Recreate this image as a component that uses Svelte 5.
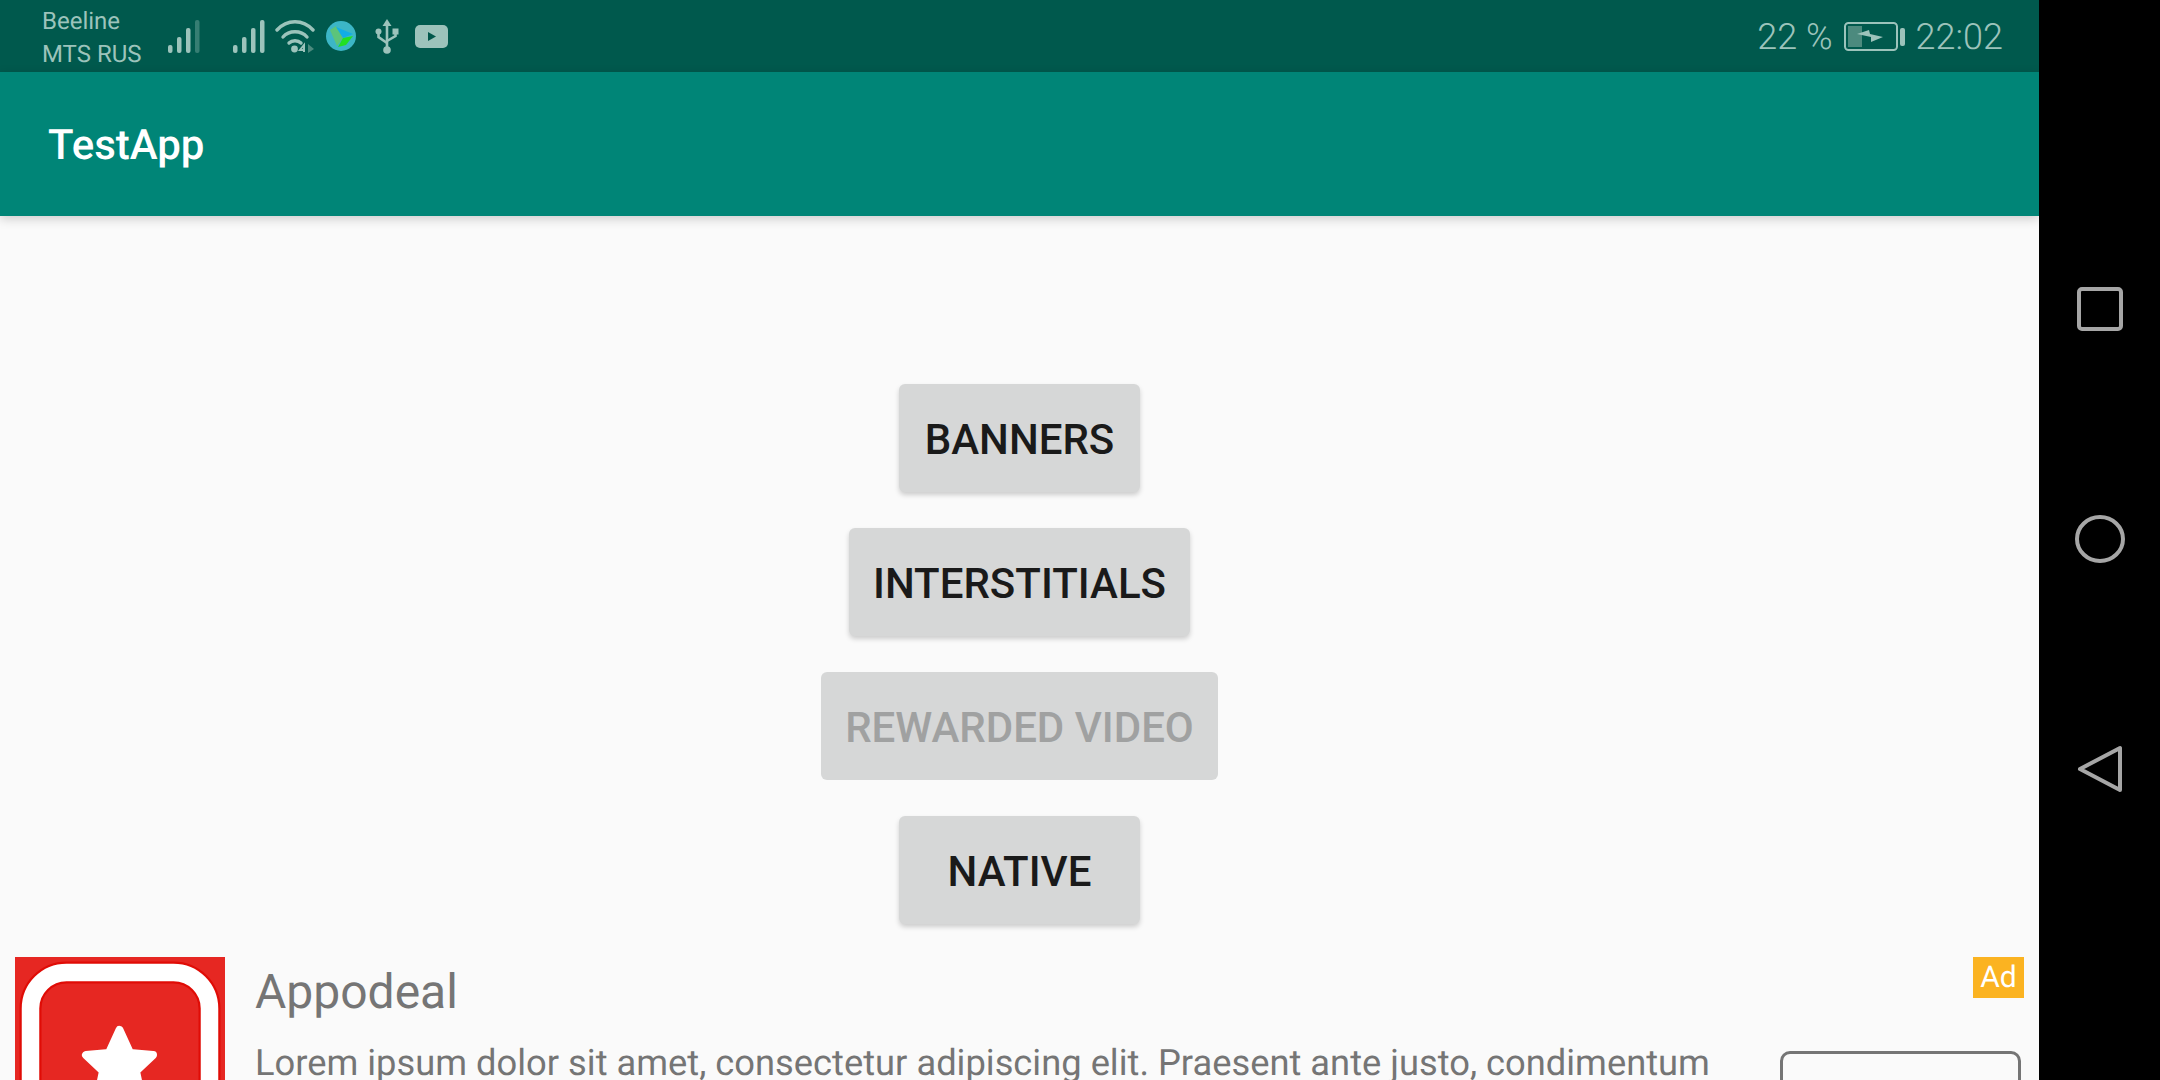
<script>
  const buttons = [
    { label: "Banners" },
    { label: "Interstitials" },
    { label: "Rewarded Video", disabled: true },
    { label: "Native" },
  ];
  const bars = [
    { x: 2, h: 8 },
    { x: 11, h: 16 },
    { x: 20, h: 25 },
    { x: 29, h: 33 },
  ];
</script>

<div class="device">
  <div class="screen">
    <div class="status-bar">
      <div class="carriers">
        <span>Beeline</span>
        <span>MTS RUS</span>
      </div>
      <div class="status-icons">
        <svg class="signal" width="35" height="33" viewBox="0 0 35 33">
          {#each bars as bar, i}
            <rect x={bar.x} y={33 - bar.h} width="4.5" height={bar.h} rx="2" fill="#9cc3bb" opacity={i === 3 ? 0.35 : 1} />
          {/each}
        </svg>
        <svg class="signal second" width="35" height="33" viewBox="0 0 35 33">
          {#each bars as bar}
            <rect x={bar.x} y={33 - bar.h} width="4.5" height={bar.h} rx="2" fill="#9cc3bb" />
          {/each}
        </svg>
        <svg class="wifi" width="40" height="34" viewBox="0 0 40 34">
          <g fill="none" stroke="#9cc3bb" stroke-width="3.4" stroke-linecap="round">
            <path d="M2 11C12 0 28 0 38 11" />
            <path d="M8 18C14 11 26 11 32 18" />
            <path d="M14 24C17 21 23 21 26 24" />
          </g>
          <circle cx="19.5" cy="30" r="3.4" fill="#9cc3bb" />
          <path d="M29 33V26L25 31H29" fill="none" stroke="#9cc3bb" stroke-width="2" />
          <path d="M33 25L39 30L33 34Z" fill="#4c8a7e" />
        </svg>
        <svg class="globe" width="30" height="30" viewBox="0 0 30 30">
          <circle cx="15" cy="15" r="15" fill="#3cb6c6" />
          <path d="M4 9L10 5L17 17L11 25Z" fill="#5cc47a" />
          <path d="M12 26L17 17L27 15L20 24Z" fill="#22e022" />
          <path d="M10 6L27 13L17 17Z" fill="#12ade6" />
        </svg>
        <svg class="usb" width="24" height="35" viewBox="0 0 24 35">
          <path d="M12 0L16.5 7H7.5Z" fill="#9cc3bb" />
          <circle cx="12" cy="31" r="3.8" fill="#9cc3bb" />
          <g fill="none" stroke="#9cc3bb" stroke-width="2.6">
            <path d="M12 5V30" />
            <path d="M3.5 14V18L12 24" />
            <path d="M20.5 13V17L12 22" />
          </g>
          <circle cx="3.5" cy="12.5" r="3" fill="#9cc3bb" />
          <rect x="17.5" y="9.5" width="6" height="6" fill="#9cc3bb" />
        </svg>
        <svg class="yt" width="33" height="23" viewBox="0 0 33 23">
          <rect width="33" height="23" rx="5" fill="#9cc3bb" />
          <path d="M13 7L21 11.5L13 16Z" fill="#00574b" />
        </svg>
      </div>
      <div class="status-right">
        <span>22 %</span>
        <svg class="battery" width="61" height="29" viewBox="0 0 61 29">
          <rect x="1" y="1" width="52" height="27" rx="3.5" fill="none" stroke="#9cc3bb" stroke-width="2" />
          <rect x="4" y="4" width="14" height="21" fill="#4c8a7e" />
          <path d="M13 12L25 8L26 12L39 15L27 20L27 15Z" fill="#9cc3bb" />
          <rect x="56" y="6" width="5" height="18" rx="2" fill="#9cc3bb" />
        </svg>
        <span class="clock">22:02</span>
      </div>
    </div>

    <header class="app-bar">TestApp</header>

    <main class="content">
      <div class="actions">
        {#each buttons as btn}
          <button disabled={btn.disabled}>{btn.label}</button>
        {/each}
      </div>

      <div class="ad">
        <svg class="ad-icon" width="210" height="210" viewBox="0 0 210 210">
          <rect width="210" height="210" fill="#e62722" />
          <rect x="15.5" y="15.5" width="179" height="190" rx="36" fill="none" stroke="#e00c06" stroke-width="22" />
          <rect x="15.5" y="15.5" width="179" height="190" rx="36" fill="none" stroke="#fff" stroke-width="17.5" />
          <polygon
            points="104.5,73 115,96 138,98 121,114 126,138 104.5,126 83,138 88,114 71,98 94,96"
            fill="#fff"
            stroke="#fff"
            stroke-width="8"
            stroke-linejoin="round"
          />
        </svg>
        <div class="ad-body">
          <h2>Appodeal</h2>
          <p>Lorem ipsum dolor sit amet, consectetur adipiscing elit. Praesent ante justo, condimentum</p>
        </div>
        <div class="cta"></div>
        <span class="ad-badge">Ad</span>
      </div>
    </main>
  </div>

  <nav class="nav-bar">
    <svg width="46" height="46" viewBox="0 0 46 46">
      <rect x="2" y="2" width="42" height="40" rx="3" fill="none" stroke="#a6a6a6" stroke-width="4" />
    </svg>
    <svg width="50" height="48" viewBox="0 0 50 48">
      <ellipse cx="25" cy="24" rx="23" ry="22" fill="none" stroke="#a6a6a6" stroke-width="4" />
    </svg>
    <svg width="46" height="48" viewBox="0 0 46 48">
      <path d="M43 3V45L3 24Z" fill="none" stroke="#a6a6a6" stroke-width="4" stroke-linejoin="round" />
    </svg>
  </nav>
</div>

<style>
  :global(body) {
    margin: 0;
    background: #000;
  }

  .device {
    display: flex;
    width: 2160px;
    height: 1080px;
    overflow: hidden;
    font-family: Roboto, "Liberation Sans", sans-serif;
    text-rendering: geometricPrecision;
  }

  .screen {
    flex: 1;
    display: flex;
    flex-direction: column;
    background: #fafafa;
    min-width: 0;
    overflow: hidden;
  }

  .status-bar {
    flex: none;
    display: flex;
    align-items: center;
    height: 72px;
    padding: 0 36px 0 42px;
    background: #00594d;
    color: #9cc3bb;
  }

  .carriers {
    display: flex;
    flex-direction: column;
    width: 124px;
    padding-top: 3px;
    font-size: 24px;
    line-height: 33px;
  }

  .status-icons {
    display: flex;
    align-items: center;
  }

  .second {
    margin-left: 30px;
  }

  .wifi {
    margin-left: 9px;
  }

  .globe {
    margin-left: 11px;
  }

  .usb {
    margin-left: 19px;
  }

  .yt {
    margin-left: 16px;
  }

  .status-right {
    display: flex;
    align-items: center;
    margin-left: auto;
    padding-top: 2px;
    font-size: 36px;
    font-weight: 300;
  }

  .battery {
    margin: -2px 0 0 11px;
  }

  .clock {
    margin-left: 11px;
  }

  .app-bar {
    flex: none;
    position: relative;
    display: flex;
    align-items: center;
    box-sizing: border-box;
    height: 144px;
    padding: 2px 0 0 48px;
    background: #008577;
    color: #fff;
    font-size: 42px;
    font-weight: 500;
    box-shadow: 0 3px 10px rgba(0, 0, 0, 0.18);
  }

  .content {
    flex: none;
    padding-top: 168px;
  }

  .actions {
    display: flex;
    flex-direction: column;
    align-items: center;
    gap: 36px;
  }

  button {
    min-width: 241px;
    height: 108px;
    padding: 2px 24px 0;
    border: 0;
    border-radius: 6px;
    background: #d6d7d7;
    color: #1a1a1a;
    font-family: inherit;
    font-size: 42px;
    font-weight: 500;
    text-transform: uppercase;
    box-shadow: 0 3px 5px rgba(0, 0, 0, 0.18);
  }

  button:disabled {
    color: #a0a1a1;
    box-shadow: none;
  }

  .ad {
    position: relative;
    display: flex;
    margin-top: 33px;
    padding: 0 18px 0 15px;
  }

  .ad-icon {
    flex: none;
  }

  .ad-body {
    flex: 1;
    margin-left: 30px;
    color: #757575;
    white-space: nowrap;
  }

  h2 {
    margin: 7px 0 0;
    font-size: 48px;
    font-weight: 400;
    line-height: 56px;
  }

  p {
    margin: 22px 0 0;
    font-size: 36.3px;
    line-height: 42px;
  }

  .cta {
    flex: none;
    width: 241px;
    height: 100px;
    margin-top: 94px;
    box-sizing: border-box;
    border: 3px solid #757575;
    border-radius: 10px;
  }

  .ad-badge {
    position: absolute;
    top: 0;
    right: 15px;
    width: 51px;
    height: 41px;
    background: #fbb321;
    color: #fff;
    font-size: 30px;
    line-height: 41px;
    text-align: center;
  }

  .nav-bar {
    flex: none;
    width: 121px;
    height: 100%;
    display: flex;
    flex-direction: column;
    align-items: center;
    gap: 182px;
    padding: 287px 0 0 0;
    background: #000;
    box-sizing: border-box;
  }
</style>
